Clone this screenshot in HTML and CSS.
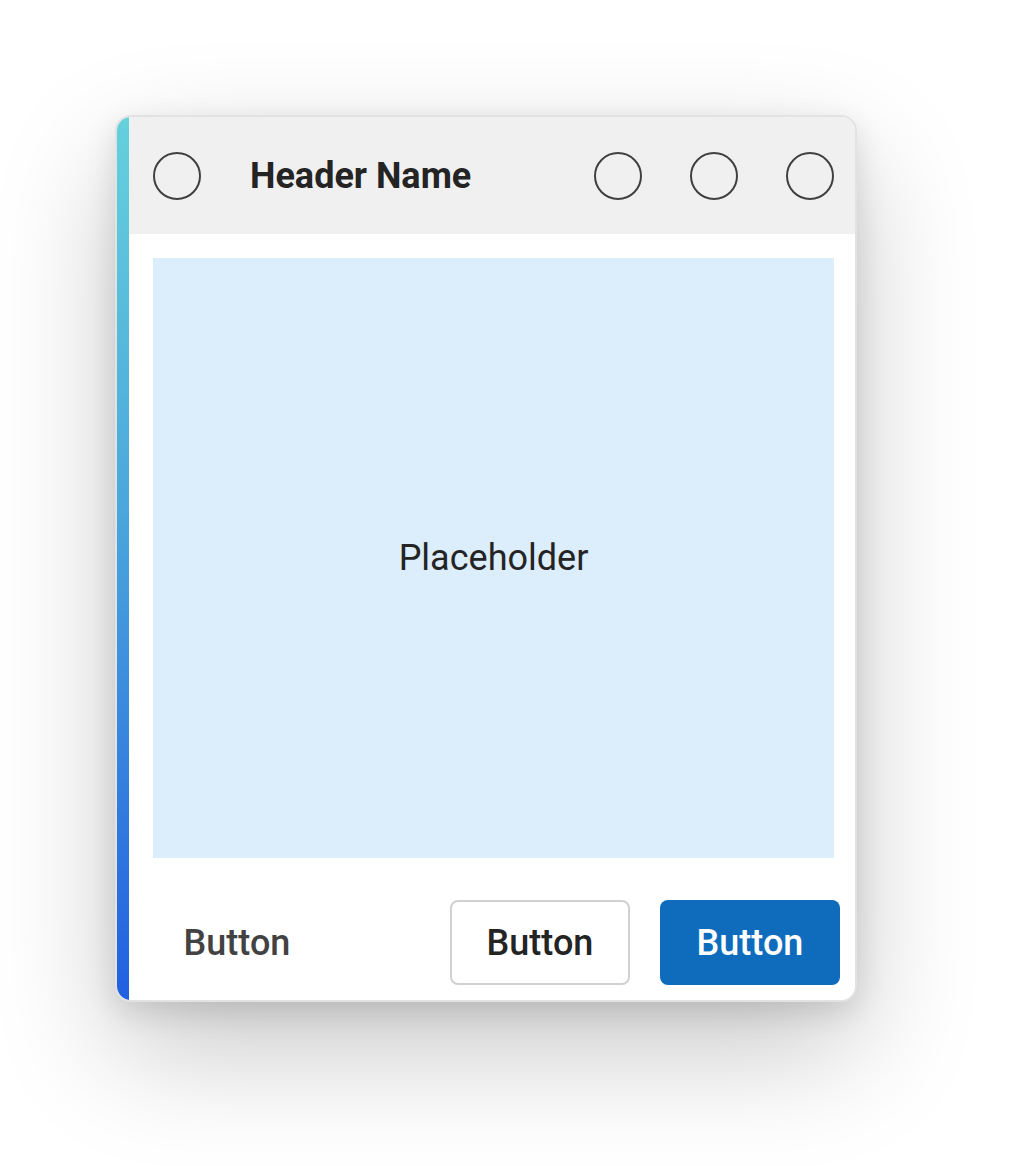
FILE: index.html
```
<!DOCTYPE html>
<html>
<head>
<meta charset="utf-8">
<link rel="stylesheet" href="styles.css">
</head>
<body>
<div class="card">
  <div class="stripe"></div>
  <div class="main">
    <div class="header">
      <span class="icon"></span>
      <span class="title">Header Name</span>
      <div class="actions">
        <span class="icon"></span>
        <span class="icon"></span>
        <span class="icon"></span>
      </div>
    </div>
    <div class="content">
      <div class="placeholder">Placeholder</div>
    </div>
    <div class="footer">
      <button class="btn ghost">Button</button>
      <div class="right">
        <button class="btn outline">Button</button>
        <button class="btn primary">Button</button>
      </div>
    </div>
  </div>
</div>
</body>
</html>
```
FILE: styles.css
```
html, body {
  margin: 0;
  padding: 0;
  background: #ffffff;
}
body {
  width: 1020px;
  height: 1166px;
  font-family: Roboto, "Liberation Sans", sans-serif;
  overflow: hidden;
}
.card {
  margin: 115px 0 0 115px;
  width: 742px;
  height: 887px;
  box-sizing: border-box;
  border: 2px solid #e2e2e2;
  border-radius: 16px;
  overflow: hidden;
  background: #ffffff;
  display: flex;
  box-shadow: 0 48px 120px rgba(0,0,0,0.22), 0 10px 30px rgba(0,0,0,0.12);
}
.stripe {
  width: 12px;
  flex: none;
  background: linear-gradient(to bottom, #65d1dc 0%, #4aa6dc 45%, #2160e0 100%);
}
.main {
  flex: 1;
  display: flex;
  flex-direction: column;
}
.header {
  height: 117px;
  flex: none;
  background: #f0f0f0;
  display: flex;
  align-items: center;
  padding: 0 21px 0 24px;
}
.icon {
  width: 48px;
  height: 48px;
  box-sizing: border-box;
  border: 2.75px solid #404040;
  border-radius: 50%;
  flex: none;
}
.title {
  margin-left: 49px;
  font-size: 36px;
  font-weight: 700;
  color: #242424;
  flex: 1;
}
.actions {
  display: flex;
  gap: 48px;
}
.content {
  padding: 24px 21px 0 24px;
}
.placeholder {
  height: 600px;
  background: #dcedfc;
  display: flex;
  align-items: center;
  justify-content: center;
  font-size: 36px;
  color: #242424;
}
.footer {
  flex: 1;
  display: flex;
  align-items: flex-start;
  justify-content: space-between;
  padding: 42px 15px 0 18px;
}
.right {
  display: flex;
  gap: 30px;
}
.btn {
  width: 180px;
  height: 85px;
  box-sizing: border-box;
  font-family: Roboto, "Liberation Sans", sans-serif;
  font-size: 36px;
  font-weight: 500;
  border-radius: 8px;
  border: 2px solid transparent;
  background: transparent;
  padding: 0;
  display: flex;
  align-items: center;
  justify-content: center;
}
.ghost {
  color: #424242;
}
.outline {
  background: #ffffff;
  border-color: #d1d1d1;
  color: #242424;
}
.primary {
  background: #0f6cbd;
  color: #ffffff;
}
```
